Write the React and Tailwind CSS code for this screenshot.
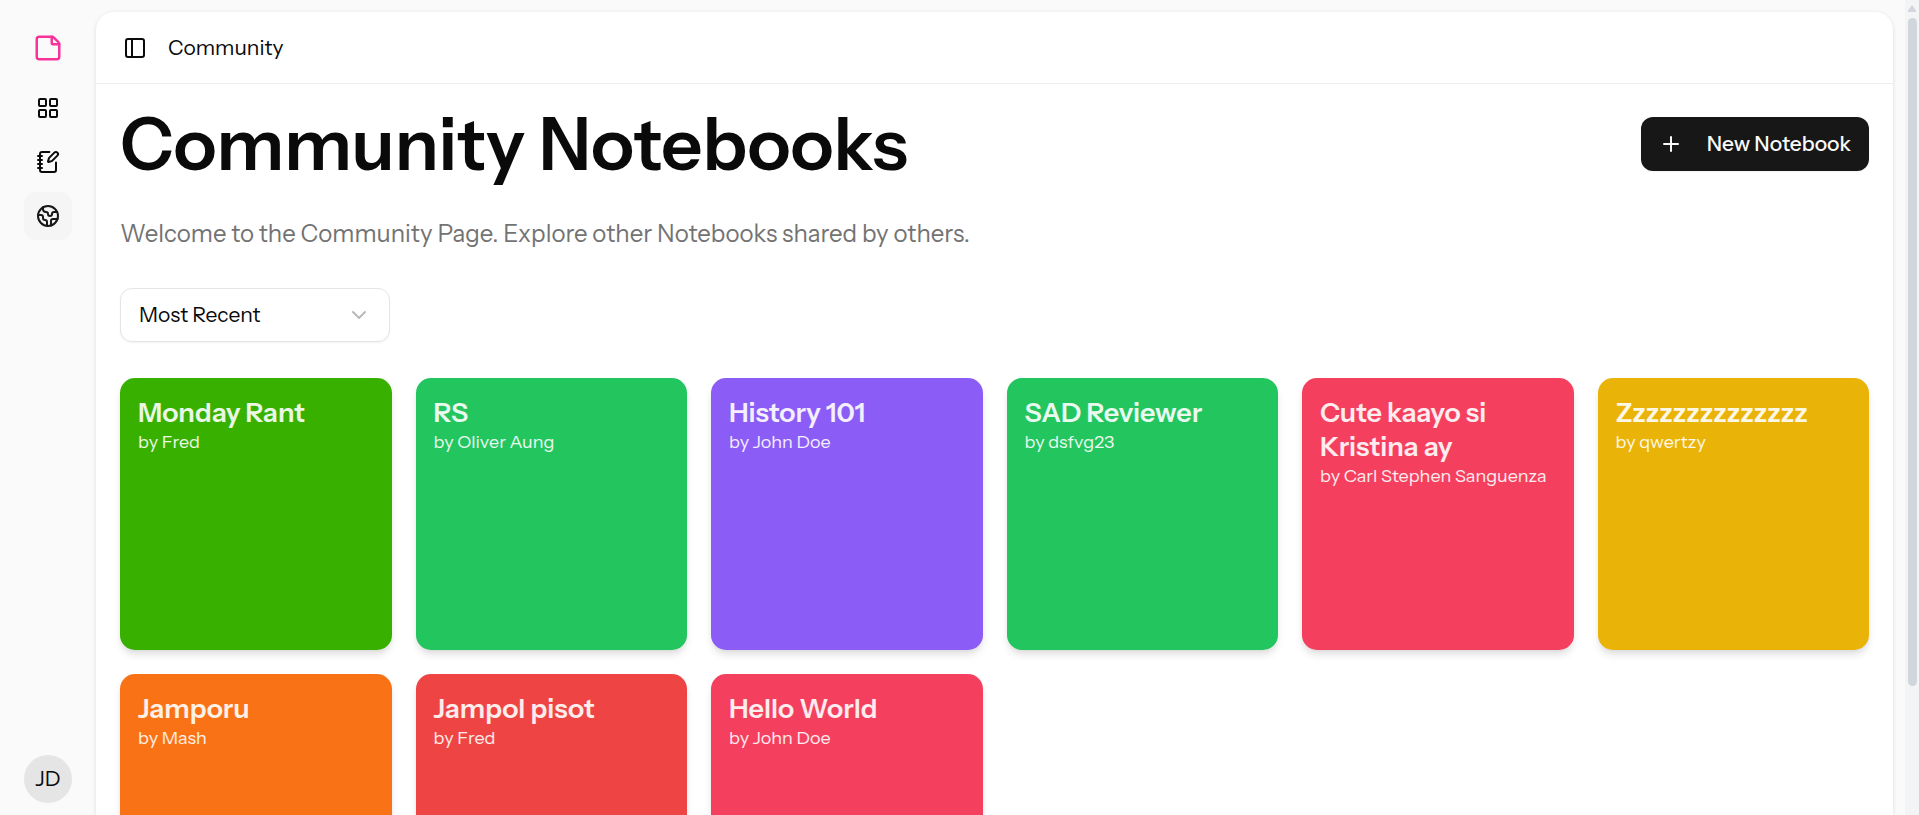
import { ChevronDown, Earth, LayoutGrid, NotebookPen, PanelLeft, Plus, StickyNote } from "lucide-react";

const navItems = [
  { label: "Dashboard", Icon: LayoutGrid },
  { label: "Notebooks", Icon: NotebookPen },
  { label: "Community", Icon: Earth, active: true },
];

const notebooks = [
  { title: "Monday Rant", author: "Fred", color: "bg-[#38b000]" },
  { title: "RS", author: "Oliver Aung", color: "bg-[#22c55e]" },
  { title: "History 101", author: "John Doe", color: "bg-[#8b5cf6]" },
  { title: "SAD Reviewer", author: "dsfvg23", color: "bg-[#22c55e]" },
  { title: "Cute kaayo si Kristina ay", author: "Carl Stephen Sanguenza", color: "bg-[#f43f5e]" },
  { title: "Zzzzzzzzzzzzzz", author: "qwertzy", color: "bg-[#eab308]" },
  { title: "Jamporu", author: "Mash", color: "bg-[#f97316]" },
  { title: "Jampol pisot", author: "Fred", color: "bg-[#ef4444]" },
  { title: "Hello World", author: "John Doe", color: "bg-[#f43f5e]" },
];

function Sidebar() {
  return (
    <aside className="flex w-24 shrink-0 flex-col items-center pt-6 pb-3">
      <a href="#home" aria-label="Home" className="flex size-12 items-center justify-center text-[#f6339a]">
        <StickyNote size={30} />
      </a>
      <nav aria-label="Main" className="mt-3 flex flex-col gap-[6px]">
        {navItems.map(({ label, Icon, active }) => (
          <a
            key={label}
            href={"#" + label.toLowerCase()}
            aria-label={label}
            className={
              active
                ? "flex size-12 items-center justify-center rounded-xl bg-neutral-100 text-neutral-900"
                : "flex size-12 items-center justify-center rounded-xl"
            }
          >
            <Icon size={24} />
          </a>
        ))}
      </nav>
      <button type="button" aria-label="Account JD" className="mt-auto size-12 rounded-full bg-neutral-200 text-[21px]">
        JD
      </button>
    </aside>
  );
}

function NotebookCard({ title, author, color }) {
  return (
    <a
      href="#notebook"
      className={
        "block aspect-square rounded-[15px] p-[18px] text-white/90 shadow-[0_6px_9px_-1px_rgba(0,0,0,0.1),0_3px_6px_-3px_rgba(0,0,0,0.1)] " +
        color
      }
    >
      <h2 className="text-[27px] leading-[34px] font-semibold">{title}</h2>
      <p className="text-[18px] leading-6">by {author}</p>
    </a>
  );
}

function Scrollbar() {
  return (
    <div aria-hidden="true" className="flex w-[14px] shrink-0 flex-col items-center bg-gray-100">
      <svg width="10" height="8" viewBox="0 0 10 8" className="mt-1 fill-gray-300">
        <path d="M5 1 9 6.500Q9.500 8 8 8H2Q.5 8 1 6.500Z" />
      </svg>
      <div className="mt-[6px] h-[82%] w-[9px] rounded-full bg-gray-300" />
    </div>
  );
}

export default function App() {
  return (
    <div className="flex h-screen overflow-hidden bg-neutral-50 font-['Instrument_Sans',Inter,sans-serif] text-neutral-950">
      <Sidebar />
      <main className="mt-3 mr-3 min-w-0 flex-1 rounded-t-[18px] bg-white shadow-[0_1px_4px_rgba(0,0,0,0.12)]">
        <header className="flex h-[72px] items-center gap-[21px] border-b border-[#ededed] px-[27px]">
          <button type="button" aria-label="Toggle sidebar">
            <PanelLeft size={24} />
          </button>
          <span className="text-[21px]">Community</span>
        </header>
        <div className="px-6 pt-6">
          <div className="flex items-center justify-between">
            <h1 className="text-7xl leading-[72px] font-semibold">Community Notebooks</h1>
            <button
              type="button"
              className="flex h-[54px] items-center gap-6 rounded-xl bg-neutral-900 px-[18px] text-[21px] font-medium text-neutral-50 shadow-xs"
            >
              <Plus size={24} />
              New Notebook
            </button>
          </div>
          <p className="mt-9 text-2xl leading-9 text-neutral-500">
            Welcome to the Community Page. Explore other Notebooks shared by others.
          </p>
          <div className="relative mt-9 w-[270px]">
            <select
              aria-label="Sort notebooks"
              className="h-[54px] w-full appearance-none rounded-xl border border-neutral-200 bg-white px-[18px] text-[21px] shadow-xs"
            >
              <option>Most Recent</option>
              <option>Oldest</option>
            </select>
            <ChevronDown size={24} className="pointer-events-none absolute top-[15px] right-[19px] text-[#b9b9b9]" />
          </div>
          <section aria-label="Notebooks" className="mt-9 grid grid-cols-6 gap-6">
            {notebooks.map((notebook) => (
              <NotebookCard key={notebook.title} {...notebook} />
            ))}
          </section>
        </div>
      </main>
      <Scrollbar />
    </div>
  );
}
